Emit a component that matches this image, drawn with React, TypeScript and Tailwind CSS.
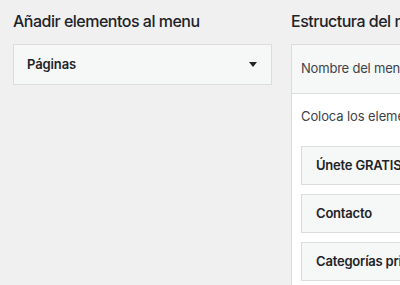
export default function App() {
  const items = ["Únete GRATIS", "Contacto", "Categorías principales"];

  return (
    <div className="w-[400px] h-[285px] overflow-hidden bg-[#f0f0f1] text-[#1d2327] font-['Inter',sans-serif]">
      <div className="flex gap-[19px] pl-[13px] pt-[9px] w-[800px]">
        {/* Añadir elementos */}
        <div className="w-[259px] shrink-0">
          <h2 className="text-[16px] leading-[24px] font-medium tracking-[-0.5px] h-[35px] whitespace-nowrap">Añadir elementos al menu</h2>
          <div className="flex items-center justify-between h-[41px] border border-[#dcdcde] bg-[#f6f7f7] pl-[13px] pr-[14px]">
            <span className="text-[13px] font-semibold tracking-[-0.1px]">Páginas</span>
            <span className="w-0 h-0 border-l-[4px] border-r-[4px] border-t-[5px] border-l-transparent border-r-transparent border-t-[#1d2327]" />
          </div>
        </div>

        {/* Estructura del menú */}
        <div className="w-[480px] shrink-0">
          <h2 className="text-[16px] leading-[24px] font-medium tracking-[-0.5px] h-[35px] whitespace-nowrap">Estructura del menú</h2>
          <div className="border border-[#dcdcde] bg-white">
            <div className="h-[49px] flex items-center pl-[9px] bg-[#f6f7f7] border-b border-[#dcdcde] text-[13px] tracking-[-0.2px] text-[#3c434a] whitespace-nowrap">
              Nombre del menú
            </div>
            <div className="px-[9px] pt-[12px] pb-[20px]">
              <p className="text-[13px] leading-[20px] tracking-[-0.1px] text-[#3c434a] whitespace-nowrap">
                Coloca los elementos de cada menú en el orden que prefieras.
              </p>
              <div className="flex flex-col gap-[9px] mt-[20px]">
                {items.map((it) => (
                  <div key={it} className="h-[39px] flex items-center pl-[14px] border border-[#dcdcde] bg-[#f6f7f7] text-[13px] font-semibold tracking-[-0.2px] whitespace-nowrap">
                    {it}
                  </div>
                ))}
              </div>
            </div>
          </div>
        </div>
      </div>
    </div>
  );
}
